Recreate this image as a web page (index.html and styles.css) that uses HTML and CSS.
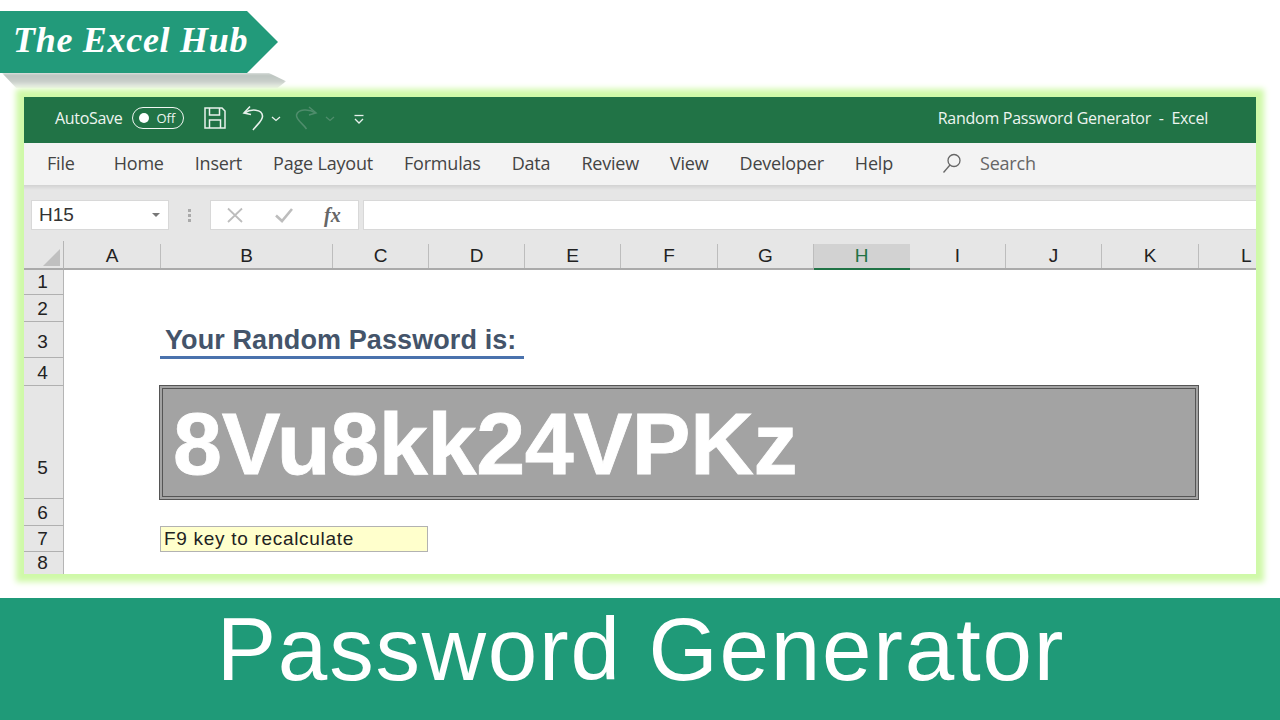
FILE: index.html
```html
<!DOCTYPE html>
<html lang="en">
<head>
<meta charset="utf-8">
<title>Password Generator</title>
<link rel="stylesheet" href="styles.css">
</head>
<body>
<div class="page">
  <header class="top">
    <div class="ribbon"><span class="ribbon-text">The Excel Hub</span></div>
    <div class="ribbon-shadow"></div>
  </header>
  <main class="window">
    <div class="titlebar">
      <div class="qat">
        <span class="autosave">AutoSave</span>
        <span class="toggle"><i class="knob"></i><span class="off">Off</span></span>
        <svg class="save" width="24" height="24" viewBox="0 0 24 24" fill="none" stroke="#e8f1ec" stroke-width="1.5"><path d="M2 2h17l3 3v17H2z"/><path d="M6.5 2v7h10V2"/><path d="M6.5 22v-8h11v8"/></svg>
        <svg class="undo" width="24" height="26" viewBox="0 0 24 26" fill="none" stroke="#e8f1ec" stroke-width="1.6"><path d="M8 1.5 2 8l7 1.5"/><path d="M2.5 8C9 3.5 20 4 20.5 11c.3 4.500-5 8-9.500 14"/></svg>
        <svg class="chev" width="10" height="6" viewBox="0 0 10 6" fill="none" stroke="#e8f1ec" stroke-width="1.300"><path d="M1 1l4 3.500L9 1"/></svg>
        <svg class="redo" width="24" height="26" viewBox="0 0 24 26" fill="none" stroke="#4f8d6c" stroke-width="1.5"><path d="M15 2l7 6-7 2"/><path d="M21.500 8C15 3.500 4 4 2.500 10c-.500 5 7 9 10 14"/></svg>
        <svg class="chev dim" width="10" height="6" viewBox="0 0 10 6" fill="none" stroke="#4f8d6c" stroke-width="1.300"><path d="M1 1l4 3.500L9 1"/></svg>
        <svg class="more" width="10" height="10" viewBox="0 0 10 10" fill="none" stroke="#e8f1ec" stroke-width="1.300"><path d="M.5 1.500h9"/><path d="M1 5l4 4 4-4"/></svg>
      </div>
      <span class="doc-title">Random Password Generator&nbsp; -&nbsp; Excel</span>
    </div>
    <nav class="menu">
      <span class="tab tab-file">File</span>
      <span class="tab tab-home">Home</span>
      <span class="tab">Insert</span>
      <span class="tab">Page Layout</span>
      <span class="tab">Formulas</span>
      <span class="tab">Data</span>
      <span class="tab">Review</span>
      <span class="tab">View</span>
      <span class="tab">Developer</span>
      <span class="tab">Help</span>
      <svg class="search-icon" width="20" height="22" viewBox="0 0 20 22" fill="none" stroke="#666" stroke-width="1.300"><circle cx="12" cy="8.500" r="6"/><path d="M8 13 1.500 20.500"/></svg>
      <span class="tab search">Search</span>
    </nav>
    <div class="ribbon-edge"></div>
    <div class="formula">
      <div class="namebox"><span>H15</span><i class="caret"></i></div>
      <div class="grip"><i></i><i></i><i></i></div>
      <div class="fx-box">
        <svg width="20" height="18" viewBox="0 0 20 18" fill="none" stroke="#bdbdbd" stroke-width="1.800"><path d="M3 2.500 17 16M17 2.500 3 16"/></svg>
        <svg class="check" width="20" height="16" viewBox="0 0 20 16" fill="none" stroke="#bdbdbd" stroke-width="2.600"><path d="M2 8.500 8 14 18 2"/></svg>
        <span class="fx">fx</span>
      </div>
      <div class="formula-input"></div>
    </div>
    <div class="sheet">
      <div class="corner"><i class="corner-tri"></i></div>
      <div class="col">A</div>
      <div class="col">B</div>
      <div class="col">C</div>
      <div class="col">D</div>
      <div class="col">E</div>
      <div class="col">F</div>
      <div class="col">G</div>
      <div class="col active">H</div>
      <div class="col">I</div>
      <div class="col">J</div>
      <div class="col">K</div>
      <div class="col last">L</div>

      <div class="row r1">1</div>
      <div class="row r2">2</div>
      <div class="row r3">3</div>
      <div class="row r4">4</div>
      <div class="row r5">5</div>
      <div class="row r6">6</div>
      <div class="row r7">7</div>
      <div class="row r8">8</div>

      <div class="heading"><span>Your Random Password is:</span></div>
      <div class="password"><span>8Vu8kk24VPKz</span></div>
      <div class="hint">F9 key to recalculate</div>
    </div>
  </main>
  <footer class="banner">Password Generator</footer>
</div>
</body>
</html>
```
FILE: styles.css
```css
* { box-sizing: border-box; }
html, body { margin: 0; padding: 0; background: #fff; }
.page { width: 1280px; height: 720px; overflow: hidden; display: flex; flex-direction: column; font-family: "Open Sans", "Liberation Sans", sans-serif; }

.top { height: 97px; padding-top: 11px; flex: none; }
.ribbon { width: 278px; height: 62px; background: #229a7a; clip-path: polygon(0 0, 247px 0, 100% 50%, 247px 100%, 0 100%); display: flex; align-items: center; padding: 0 0 4px 13px; }
.ribbon-text { font-family: "Liberation Serif", serif; font-style: italic; font-weight: 700; font-size: 36px; color: #fff; letter-spacing: .7px; white-space: nowrap; }
.ribbon-shadow { width: 284px; height: 15px; margin-left: 2px; background: linear-gradient(#b9c2be, #c9cfca 60%, rgba(215,230,200,.3)); clip-path: polygon(0 0, 94% 0, 100% 55%, 97% 100%, 5% 100%); filter: blur(1.500px); }

.window { flex: none; width: 1232px; height: 477px; margin-left: 24px; display: flex; flex-direction: column; background: #fff; box-shadow: 0 0 6px 8px #cff9a8; }

.titlebar { height: 46px; flex: none; background: #217346; display: flex; justify-content: space-between; align-items: center; padding: 0 48px 4px 31px; color: #eef5f0; font-size: 16px; }
.qat { display: flex; align-items: center; }
.autosave { letter-spacing: -.3px; }
.toggle { margin-left: 9px; width: 52px; height: 22px; border: 1.300px solid #f0f6f2; border-radius: 11px; display: flex; align-items: center; padding-left: 6px; font-size: 13px; }
.knob { width: 10px; height: 10px; border-radius: 50%; background: #fff; }
.off { margin-left: 8px; }
.save { margin-left: 19px; }
.undo { margin-left: 15px; }
.chev { margin-left: 5px; margin-top: 2px; }
.redo { margin-left: 13px; }
.chev.dim { margin-left: 7px; }
.more { margin-left: 19px; margin-top: 2px; }
.doc-title { letter-spacing: -.27px; white-space: nowrap; }

.menu { height: 42px; flex: none; background: #f3f3f3; display: flex; align-items: center; color: #444; font-size: 18px; padding: 0 0 2px 23px; gap: 31px; }
.tab { white-space: nowrap; letter-spacing: -.2px; }
.tab-home { margin-left: 8px; }
.search-icon { margin-left: 18px; }
.search { margin-left: -13px; color: #666; }

.ribbon-edge { height: 5px; flex: none; background: linear-gradient(#d2d2d2, #e6e6e6); }

.formula { height: 51px; flex: none; background: #e6e6e6; display: flex; align-items: flex-start; padding: 10px 0 0 7px; }
.namebox { width: 138px; height: 30px; background: #fff; border: 1px solid #d8d8d8; display: flex; align-items: center; justify-content: space-between; padding: 0 8px 0 7px; color: #333; font-family: "Liberation Sans", sans-serif; font-size: 19px; }
.caret { width: 0; height: 0; border-left: 4px solid transparent; border-right: 4px solid transparent; border-top: 4px solid #777; }
.grip { width: 41px; height: 30px; display: flex; flex-direction: column; align-items: center; justify-content: center; gap: 2px; }
.grip i { width: 3px; height: 3px; background: #aaa; }
.fx-box { width: 149px; height: 30px; background: #fff; border: 1px solid #d8d8d8; display: flex; align-items: center; padding-left: 14px; }
.check { margin-left: 29px; }
.fx { margin-left: 30px; font-family: "Liberation Serif", serif; font-style: italic; font-weight: 700; font-size: 20px; color: #666; }
.formula-input { flex: 1; height: 30px; margin-left: 4px; background: #fff; border: 1px solid #d8d8d8; border-right: 0; }

.sheet { flex: 1; min-height: 0; display: grid; grid-template-columns: 40px 97px 172px 96px 96px 96px 97px 96px 96px 96px 96px 97px 57px; grid-template-rows: 29px 25px 27px 36px 28px 113px 27px 26px 22px; font-family: "Liberation Sans", sans-serif; color: #222; overflow: hidden; }
.corner { background: #e6e6e6; border-right: 1px solid #b5b5b5; border-bottom: 2px solid #aaa; display: flex; justify-content: flex-end; align-items: flex-end; padding: 0 3px 2px 0; }
.corner-tri { width: 0; height: 0; border-left: 17px solid transparent; border-bottom: 17px solid #c0c0c0; }
.col { background: linear-gradient(#bdbdbd, #bdbdbd) right 3px / 1px 100% no-repeat #e6e6e6; border-bottom: 2px solid #aaa; display: flex; align-items: center; justify-content: center; font-size: 19px; padding-top: 3px; padding-right: 1px; }
.col.active { background: linear-gradient(#d2d2d2, #d2d2d2) 0 3px no-repeat #e6e6e6; border-bottom: 2px solid #217346; color: #217346; }
.col.last { background: #e6e6e6; justify-content: flex-start; padding-left: 42px; }
.row { grid-column: 1; background: #e6e6e6; border-right: 1px solid #b5b5b5; border-bottom: 1px solid #b0b0b0; display: flex; align-items: flex-end; justify-content: center; font-size: 19px; padding-bottom: 1px; padding-right: 2px; }
.r1 { grid-row: 2; } .r2 { grid-row: 3; } .r3 { grid-row: 4; padding-bottom: 4px; } .r4 { grid-row: 5; } .r5 { grid-row: 6; padding-bottom: 19px; } .r6 { grid-row: 7; } .r7 { grid-row: 8; } .r8 { grid-row: 9; border-bottom: 0; padding-bottom: 0; }

.heading { grid-row: 4; grid-column: 3 / 6; border-bottom: 3px solid #4a72ad; display: flex; align-items: flex-end; padding-left: 5px; margin: 0 1px -1px -1px; }
.heading span { font-weight: 700; font-size: 27px; color: #44546a; letter-spacing: .1px; white-space: nowrap; }
.password { grid-row: 6; grid-column: 3 / 13; margin: -1px 0 -1px -2px; border: 4px double #555; background: #a3a3a3; display: flex; align-items: center; padding: 3px 0 0 10px; }
.password span { font-family: "Liberation Sans", sans-serif; font-weight: 700; font-size: 88px; letter-spacing: -.3px; -webkit-text-stroke: .8px #fff; color: #fff; white-space: nowrap; }
.hint { grid-row: 8; grid-column: 3 / 5; margin: 0 1px 0 -1px; background: #ffffcc; border: 1px solid #b2b2b2; display: flex; align-items: center; padding-left: 3px; font-size: 19px; color: #222; letter-spacing: .7px; white-space: nowrap; }

.banner { margin-top: 24px; flex: 1; background: #1f9a78; color: #fff; font-family: "Liberation Sans", sans-serif; font-size: 89px; letter-spacing: 1.800px; display: flex; align-items: center; justify-content: center; white-space: nowrap; padding: 0 0 26px 2px; }
```
